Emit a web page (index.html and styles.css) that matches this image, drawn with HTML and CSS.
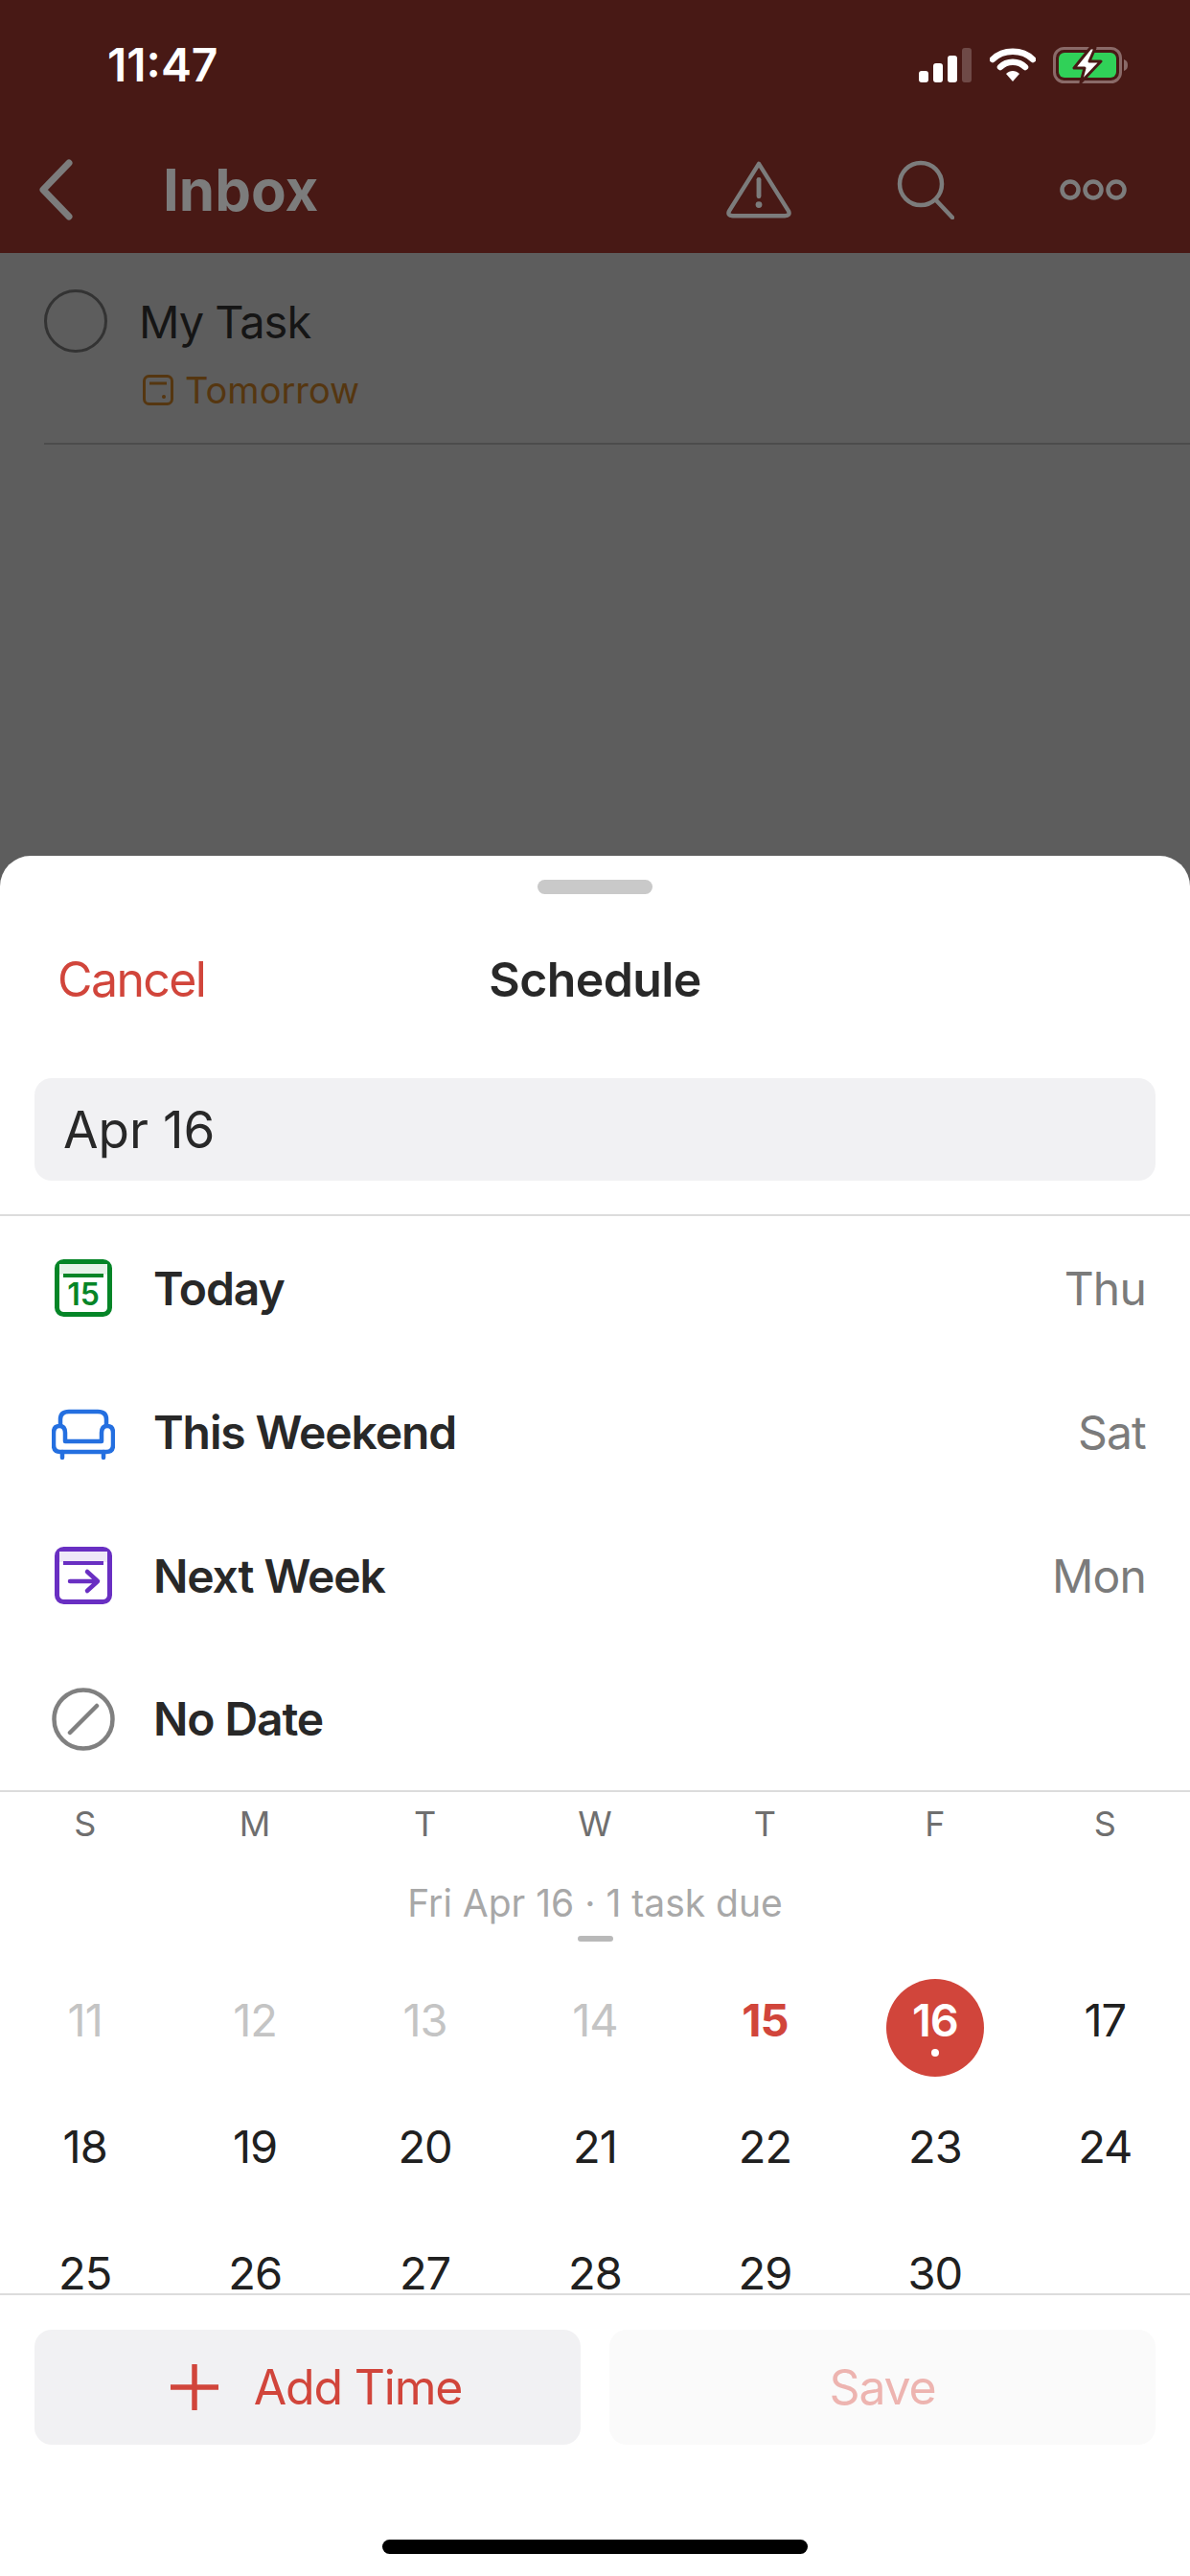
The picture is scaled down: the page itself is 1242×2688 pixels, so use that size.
FILE: index.html
```html
<!DOCTYPE html>
<html lang="en">
<head>
  <meta charset="UTF-8" />
  <meta name="viewport" content="width=device-width, initial-scale=1" />
  <title>Schedule</title>
  <link rel="stylesheet" href="styles.css">
</head>
<body>

<div class="phone">
  <!-- page behind the sheet -->
  <div class="topbar">
    <div class="status">
      <span class="time">11:47</span>
      <div class="status-icons">
        <svg width="56" height="36" viewBox="0 0 56 36"><rect x="0" y="24" width="10" height="12" rx="3" fill="#fff"/><rect x="15" y="16" width="10" height="20" rx="3" fill="#fff"/><rect x="30" y="8" width="10" height="28" rx="3" fill="#fff"/><rect x="45" y="0" width="10" height="36" rx="3" fill="#6f4a47"/></svg>
        <svg width="48" height="36" viewBox="0 0 48 36"><path d="M3 12 C14 1 34 1 45 12" fill="none" stroke="#fff" stroke-width="6.5" stroke-linecap="round"/><path d="M11 20 C18 13 30 13 37 20" fill="none" stroke="#fff" stroke-width="6.5" stroke-linecap="round"/><path d="M17 27 C21 23 27 23 31 27 L24 35 Z" fill="#fff"/></svg>
        <svg width="80" height="38" viewBox="0 0 80 38"><rect x="1.5" y="1.5" width="69" height="35" rx="10" fill="none" stroke="#8a6a68" stroke-width="3"/><path d="M74 13 C77 14 78 16 78 19 C78 22 77 24 74 25 Z" fill="#8a6a68"/><rect x="6" y="6" width="60" height="26" rx="6" fill="#30d158"/><path d="M39 1 L22 22 H33 L29 37 L50 15 H38 L44 1 Z" fill="#fff" stroke="#481915" stroke-width="3" stroke-linejoin="round"/></svg>
      </div>
    </div>
    <div class="nav">
      <svg class="back" width="36" height="64" viewBox="0 0 36 64"><path d="M32 4 L5 32 L32 60" fill="none" stroke="#7c7c7c" stroke-width="7" stroke-linecap="round" stroke-linejoin="round"/></svg>
      <span class="nav-title">Inbox</span>
      <div class="nav-icons">
        <svg width="68" height="62" viewBox="0 0 70 62"><path d="M35 3 L67 54 Q69 59 63 59 H7 Q1 59 3 54 Z" fill="none" stroke="#7c7c7c" stroke-width="4.5" stroke-linejoin="round"/><path d="M35 20 V38" stroke="#7c7c7c" stroke-width="5" stroke-linecap="round"/><circle cx="35" cy="47" r="3.5" fill="#7c7c7c"/></svg>
        <svg width="60" height="62" viewBox="0 0 60 62"><circle cx="25" cy="25" r="22" fill="none" stroke="#7c7c7c" stroke-width="4.5"/><path d="M41 42 L58 60" stroke="#7c7c7c" stroke-width="4.5" stroke-linecap="round"/></svg>
        <svg width="70" height="24" viewBox="0 0 70 24"><g fill="none" stroke="#7c7c7c" stroke-width="4.5"><circle cx="11" cy="12" r="8.5"/><circle cx="35" cy="12" r="8.5"/><circle cx="59" cy="12" r="8.5"/></g></svg>
      </div>
    </div>
  </div>

  <div class="task">
    <div class="task-check"></div>
    <div class="task-body">
      <div class="task-name">My Task</div>
      <div class="task-due">
        <svg width="32" height="32" viewBox="0 0 32 32"><rect x="1.5" y="1.5" width="29" height="29" rx="5" fill="none" stroke="#553610" stroke-width="3"/><path d="M7 9 H25" stroke="#553610" stroke-width="3"/><circle cx="22" cy="23" r="2" fill="#553610"/></svg>
        <span>Tomorrow</span>
      </div>
    </div>
  </div>

  <!-- schedule sheet -->
  <div class="sheet">
    <div class="grabber"></div>
    <div class="sheet-head">
      <span class="cancel">Cancel</span>
      <span class="sheet-title">Schedule</span>
    </div>
    <div class="date-input">Apr 16</div>

    <div class="quick-list">
      <div class="quick-row">
        <svg class="quick-icon" width="66" height="66" viewBox="0 0 66 66"><rect x="5.5" y="5.5" width="55" height="55" rx="7" fill="#fff" stroke="#058527" stroke-width="5"/><rect x="8" y="8" width="50" height="11" fill="#e6f3e9"/><path d="M12 20 H54" stroke="#058527" stroke-width="4"/><text x="33" y="51" class="icon-num">15</text></svg>
        <span class="quick-name">Today</span>
        <span class="quick-day">Thu</span>
      </div>
      <div class="quick-row">
        <svg class="quick-icon" width="66" height="66" viewBox="0 0 66 66"><path d="M9 27 V20 Q9 12 18 12 H48 Q57 12 57 20 V27" fill="none" stroke="#246fe0" stroke-width="4.5"/><path d="M14 43 V34 Q14 27 8 27 Q2 27 2 34 V47 Q2 54 9 54 H57 Q64 54 64 47 V34 Q64 27 58 27 Q52 27 52 34 V43 Z" fill="none" stroke="#246fe0" stroke-width="4.5" stroke-linejoin="round"/><path d="M11 54 V60 M54 54 V60" stroke="#246fe0" stroke-width="4.5" stroke-linecap="round"/></svg>
        <span class="quick-name">This Weekend</span>
        <span class="quick-day">Sat</span>
      </div>
      <div class="quick-row">
        <svg class="quick-icon" width="66" height="66" viewBox="0 0 66 66"><rect x="5.5" y="5.5" width="55" height="55" rx="7" fill="#fff" stroke="#692fc2" stroke-width="5"/><rect x="8" y="8" width="50" height="11" fill="#efe8f8"/><path d="M12 20 H54" stroke="#692fc2" stroke-width="4"/><path d="M19 39 H47 M37 29 L48 39 L37 49" fill="none" stroke="#692fc2" stroke-width="4.5" stroke-linecap="round" stroke-linejoin="round"/></svg>
        <span class="quick-name">Next Week</span>
        <span class="quick-day">Mon</span>
      </div>
      <div class="quick-row">
        <svg class="quick-icon" width="66" height="66" viewBox="0 0 66 66"><circle cx="33" cy="33" r="30.5" fill="none" stroke="#808080" stroke-width="4.5"/><path d="M19 47 L47 19" stroke="#808080" stroke-width="4.5" stroke-linecap="round"/></svg>
        <span class="quick-name">No Date</span>
      </div>
    </div>

    <div class="calendar">
      <div class="week-head">
        <span>S</span><span>M</span><span>T</span><span>W</span><span>T</span><span>F</span><span>S</span>
      </div>
      <div class="cal-note">Fri Apr 16 · 1 task due</div>
      <div class="cal-mark"></div>
      <div class="days">
        <div class="day past"><span>11</span></div>
        <div class="day past"><span>12</span></div>
        <div class="day past"><span>13</span></div>
        <div class="day past"><span>14</span></div>
        <div class="day today"><span>15</span></div>
        <div class="day selected"><span>16</span></div>
        <div class="day"><span>17</span></div>
        <div class="day"><span>18</span></div>
        <div class="day"><span>19</span></div>
        <div class="day"><span>20</span></div>
        <div class="day"><span>21</span></div>
        <div class="day"><span>22</span></div>
        <div class="day"><span>23</span></div>
        <div class="day"><span>24</span></div>
        <div class="day"><span>25</span></div>
        <div class="day"><span>26</span></div>
        <div class="day"><span>27</span></div>
        <div class="day"><span>28</span></div>
        <div class="day"><span>29</span></div>
        <div class="day"><span>30</span></div>
      </div>
    </div>

    <div class="sheet-foot">
      <div class="btn btn-time">
        <svg width="50" height="48" viewBox="0 0 50 48"><path d="M25 1 V47 M1 24 H49" stroke="#d1453b" stroke-width="5.5" stroke-linecap="round"/></svg>
        <span>Add Time</span>
      </div>
      <div class="btn btn-save">Save</div>
    </div>
    <div class="home-bar"></div>
  </div>
</div>

</body>
</html>
```

FILE: styles.css
```css
* {
  box-sizing: border-box;
}
body {
  margin: 0;
  font-family: 'Inter', 'Liberation Sans', sans-serif;
  background: #5d5d5d;
}
.phone {
  position: relative;
  width: 1242px;
  height: 2688px;
  overflow: hidden;
  background: #5d5d5d;
}

/* top bar */
.topbar {
  height: 264px;
  background: #481915;
}
.status {
  height: 132px;
  display: flex;
  align-items: center;
  justify-content: space-between;
  padding: 3px 63px 0 112px;
}
.time {
  color: #fff;
  font-size: 48px;
  font-weight: 600;
}
.status-icons {
  display: flex;
  align-items: center;
  gap: 18px;
}
.nav {
  height: 132px;
  display: flex;
  align-items: center;
  padding: 0 66px 0 40px;
}
.nav-title {
  margin-left: 94px;
  color: #7c7c7c;
  font-size: 60px;
  font-weight: 700;
}
.nav-icons {
  margin-left: auto;
  display: flex;
  align-items: center;
  gap: 110px;
}

/* task */
.task {
  display: flex;
  margin-left: 46px;
  padding: 38px 0 0;
  height: 200px;
  border-bottom: 2px solid #4c4c4c;
}
.task-check {
  width: 66px;
  height: 66px;
  border: 3px solid #333;
  border-radius: 50%;
}
.task-body {
  margin-left: 33px;
}
.task-name {
  color: #151515;
  font-size: 47px;
  line-height: 68px;
  letter-spacing: -1px;
}
.task-due {
  display: flex;
  align-items: center;
  gap: 12px;
  margin-top: 14px;
  margin-left: 4px;
  color: #553610;
  font-size: 38px;
}

/* sheet */
.sheet {
  position: absolute;
  left: 0;
  right: 0;
  top: 893px;
  bottom: 0;
  background: #fff;
  border-radius: 32px 32px 0 0;
  display: flex;
  flex-direction: column;
}
.grabber {
  width: 120px;
  height: 15px;
  margin: 25px auto 7px;
  background: #c9c9c9;
  border-radius: 8px;
}
.sheet-head {
  height: 164px;
  display: flex;
  align-items: center;
  justify-content: center;
  position: relative;
}
.cancel {
  position: absolute;
  left: 60px;
  color: #d1453b;
  font-size: 50px;
  letter-spacing: -1.6px;
}
.sheet-title {
  color: #282828;
  font-size: 50px;
  font-weight: 600;
  letter-spacing: -0.6px;
}
.date-input {
  height: 107px;
  margin: 21px 36px 36px;
  padding-left: 30px;
  background: #f1f1f3;
  border-radius: 18px;
  display: flex;
  align-items: center;
  color: #282828;
  font-size: 53px;
}

.quick-list {
  border-top: 2px solid #dcdcdc;
  border-bottom: 2px solid #dcdcdc;
  margin-top: -1px;
}
.quick-row {
  height: 150px;
  display: flex;
  align-items: center;
  padding: 0 46px 0 54px;
}
.quick-row:last-child {
  height: 149px;
}
.quick-icon {
  flex: none;
}
.icon-num {
  font-size: 32px;
  font-weight: 600;
  fill: #058527;
  text-anchor: middle;
}
.quick-name {
  margin-left: 40px;
  color: #282828;
  font-size: 48px;
  font-weight: 600;
  letter-spacing: -1.1px;
}
.quick-day {
  margin-left: auto;
  color: #7b7b7b;
  font-size: 48px;
  letter-spacing: -0.8px;
}

/* calendar */
.calendar {
  height: 523px;
}
.week-head {
  display: grid;
  grid-template-columns: repeat(7, 1fr);
  height: 66px;
  align-items: center;
  text-align: center;
  color: #6f6f6f;
  font-size: 36px;
}
.cal-note {
  height: 100px;
  line-height: 100px;
  text-align: center;
  color: #a8a8a8;
  font-size: 39px;
}
.cal-mark {
  width: 37px;
  height: 6px;
  margin: -16px auto 24px;
  background: #b9b9b9;
  border-radius: 3px;
}
.days {
  display: grid;
  grid-template-columns: repeat(7, 1fr);
  grid-template-rows: 132px 132px 78px;
}
.day {
  display: flex;
  justify-content: center;
  align-items: flex-start;
  padding-top: 38px;
  color: #202020;
  font-size: 47px;
  line-height: 40px;
  letter-spacing: -1px;
}
.day.past {
  color: #c4c4c4;
}
.day.today {
  color: #d1453b;
  font-weight: 700;
}
.day.selected span {
  position: relative;
  width: 102px;
  height: 102px;
  margin-top: -23px;
  padding-top: 23px;
  text-align: center;
  background: #d1453b;
  border-radius: 50%;
  color: #fff;
  font-weight: 600;
}
.day.selected span::after {
  content: "";
  position: absolute;
  left: 47px;
  top: 73px;
  width: 8px;
  height: 8px;
  background: #fff;
  border-radius: 50%;
}

/* bottom buttons */
.sheet-foot {
  display: grid;
  grid-template-columns: 1fr 1fr;
  gap: 30px;
  padding: 36px 36px 0;
  border-top: 2px solid #dcdcdc;
}
.btn {
  height: 120px;
  border-radius: 18px;
  display: flex;
  align-items: center;
  justify-content: center;
  font-size: 50px;
  letter-spacing: -1.2px;
}
.btn-time {
  gap: 37px;
  padding-left: 18px;
  background: #f1f1f3;
  color: #d1453b;
}
.btn-save {
  background: #fafafa;
  color: #edb4b0;
}
.home-bar {
  width: 444px;
  height: 15px;
  margin: 99px auto 0;
  background: #000;
  border-radius: 8px;
}
```
